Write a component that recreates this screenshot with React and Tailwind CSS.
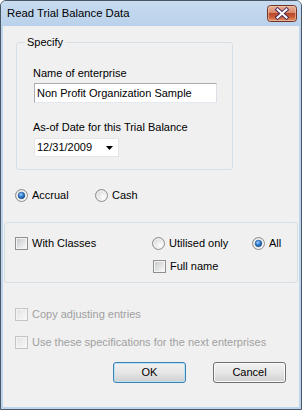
import React from 'react'

function Radio({ checked }) {
  return (
    <svg width="13" height="13" viewBox="0 0 13 13" className="shrink-0">
      <defs>
        <radialGradient id="rbg" cx="0.65" cy="0.65" r="0.7">
          <stop offset="0" stopColor="#ffffff" />
          <stop offset="1" stopColor="#d4d4d4" />
        </radialGradient>
        <radialGradient id="rdot" cx="0.4" cy="0.35" r="0.7">
          <stop offset="0" stopColor="#a9d4ff" />
          <stop offset="0.5" stopColor="#2f7fd6" />
          <stop offset="1" stopColor="#14457f" />
        </radialGradient>
      </defs>
      <circle cx="6.5" cy="6.5" r="6" fill="url(#rbg)" stroke="#8e8f8f" strokeWidth="1" />
      <circle cx="6.5" cy="6.5" r="4.5" fill="none" stroke="#f4f4f4" strokeWidth="1" />
      {checked && <circle cx="6.5" cy="6.5" r="3.3" fill="url(#rdot)" stroke="#1a4f8c" strokeWidth="0.6" />}
    </svg>
  )
}

function Check({ disabled }) {
  return (
    <svg width="13" height="13" viewBox="0 0 13 13" className="shrink-0">
      <defs>
        <linearGradient id="cbg" x1="0" y1="0" x2="1" y2="1">
          <stop offset="0" stopColor="#c9cbce" />
          <stop offset="1" stopColor="#f7f7f7" />
        </linearGradient>
        <linearGradient id="cbgd" x1="0" y1="0" x2="1" y2="1">
          <stop offset="0" stopColor="#e4e4e4" />
          <stop offset="1" stopColor="#f7f7f7" />
        </linearGradient>
      </defs>
      <rect x="0.5" y="0.5" width="12" height="12" fill="#f4f4f4" stroke={disabled ? '#c4c4c4' : '#8e8f8f'} />
      <rect x="2" y="2" width="9" height="9" fill={disabled ? 'url(#cbgd)' : 'url(#cbg)'} />
    </svg>
  )
}

function Option({ type, checked, disabled, label, className = '' }) {
  return (
    <div className={`flex items-center h-[13px] ${className}`}>
      {type === 'radio' ? <Radio checked={checked} /> : <Check disabled={disabled} />}
      <span className={`ml-[4px] leading-[13px] whitespace-nowrap ${disabled ? 'text-[#a0a0a0]' : 'text-black'}`}>
        {label}
      </span>
    </div>
  )
}

function CloseButton() {
  return (
    <svg width="30" height="17" viewBox="0 0 30 17" className="shrink-0 mt-[4px] mr-[4px]">
      <defs>
        <linearGradient id="cls" x1="0" y1="0" x2="0" y2="1">
          <stop offset="0" stopColor="#eab59d" />
          <stop offset="0.45" stopColor="#d9876a" />
          <stop offset="0.5" stopColor="#b8482a" />
          <stop offset="0.7" stopColor="#c65a33" />
          <stop offset="1" stopColor="#e99a6b" />
        </linearGradient>
      </defs>
      <rect x="0.5" y="0.5" width="29" height="16" rx="3" fill="url(#cls)" stroke="#6e3424" />
      <rect x="1.5" y="1.5" width="27" height="14" rx="2" fill="none" stroke="#f3c9b4" strokeOpacity="0.6" />
      <path d="M10.5 4.5 L19.5 12.5 M19.5 4.5 L10.5 12.5" stroke="#4a2d5c" strokeWidth="4" strokeLinecap="square" />
      <path d="M10.5 4.5 L19.5 12.5 M19.5 4.5 L10.5 12.5" stroke="#ffffff" strokeWidth="2" strokeLinecap="square" />
    </svg>
  )
}

function Button({ children, primary }) {
  return (
    <button
      className={`h-[21px] w-[73px] rounded-[3px] border text-[11px] leading-[13px] text-black bg-gradient-to-b from-[#f2f2f2] via-[#e6e6e6] to-[#cfcfcf] ${
        primary ? 'border-[#3c7fb1] shadow-[inset_0_0_0_1px_#b6e3f8]' : 'border-[#707070] shadow-[inset_0_0_0_1px_#fbfbfb]'
      }`}
    >
      {children}
    </button>
  )
}

export default function App() {
  return (
    <div className="w-[302px] h-[410px] flex flex-col border border-[#4a5865] rounded-t-[6px] overflow-hidden bg-[#bcd4ec] font-['Liberation_Sans',Arial,sans-serif] text-[11px]">
      {/* Title bar */}
      <div className="h-[25px] flex items-start justify-between bg-gradient-to-b from-[#c8dcf1] to-[#b9d1ea]">
        <span className="pl-[6px] pt-[6px] text-[11.3px] leading-[13px] text-black">Read Trial Balance Data</span>
        <CloseButton />
      </div>

      {/* Frame */}
      <div className="flex-1 flex flex-col px-[2px] pb-[2px] bg-[#bcd4ec]">
        <div className="flex-1 flex flex-col bg-[#f0f0f0]">
          {/* Specify group */}
          <fieldset className="ml-[13px] mt-[10px] w-[217px] border border-[#d5dfe5] rounded-[3px] pl-[16px] pb-[12px]">
            <legend className="-ml-[8px] px-[2px] leading-[13px] text-black">Specify</legend>
            <div className="mt-[18px] leading-[13px] text-black">Name of enterprise</div>
            <div className="mt-[3px] ml-[1px] h-[20px] w-[183px] border border-[#abadb3] border-b-[#e3e9ef] border-r-[#dbdfe6] bg-white flex items-center pl-[2px] text-black">
              Non Profit Organization Sample
            </div>
            <div className="mt-[18px] leading-[13px] text-black">As-of Date for this Trial Balance</div>
            <div className="mt-[4px] ml-[1px] h-[19px] w-[85px] border border-[#e6e6e6] bg-white flex items-center justify-between pl-[2px] pr-[5px] text-black">
              <span>12/31/2009</span>
              <svg width="7" height="4" viewBox="0 0 7 4">
                <path d="M0 0 H7 L3.5 4 Z" fill="#000" />
              </svg>
            </div>
          </fieldset>

          {/* Basis */}
          <div className="flex mt-[19px] ml-[12px]">
            <Option type="radio" checked label="Accrual" className="w-[80px]" />
            <Option type="radio" label="Cash" />
          </div>

          {/* Classes group */}
          <div className="mt-[20px] ml-[1px] w-[294px] border border-[#d5dfe5] rounded-[3px] pl-[10px] pt-[14px] pb-[9px]">
            <div className="flex">
              <Option type="check" label="With Classes" className="w-[137px]" />
              <Option type="radio" label="Utilised only" className="w-[100px]" />
              <Option type="radio" checked label="All" />
            </div>
            <Option type="check" label="Full name" className="mt-[10px] ml-[138px]" />
          </div>

          <Option type="check" disabled label="Copy adjusting entries" className="mt-[25px] ml-[12px]" />
          <Option type="check" disabled label="Use these specifications for the next enterprises" className="mt-[15px] ml-[12px]" />

          <div className="flex mt-[13px] ml-[110px] gap-[27px]">
            <Button primary>OK</Button>
            <Button>Cancel</Button>
          </div>
        </div>
      </div>
    </div>
  )
}
